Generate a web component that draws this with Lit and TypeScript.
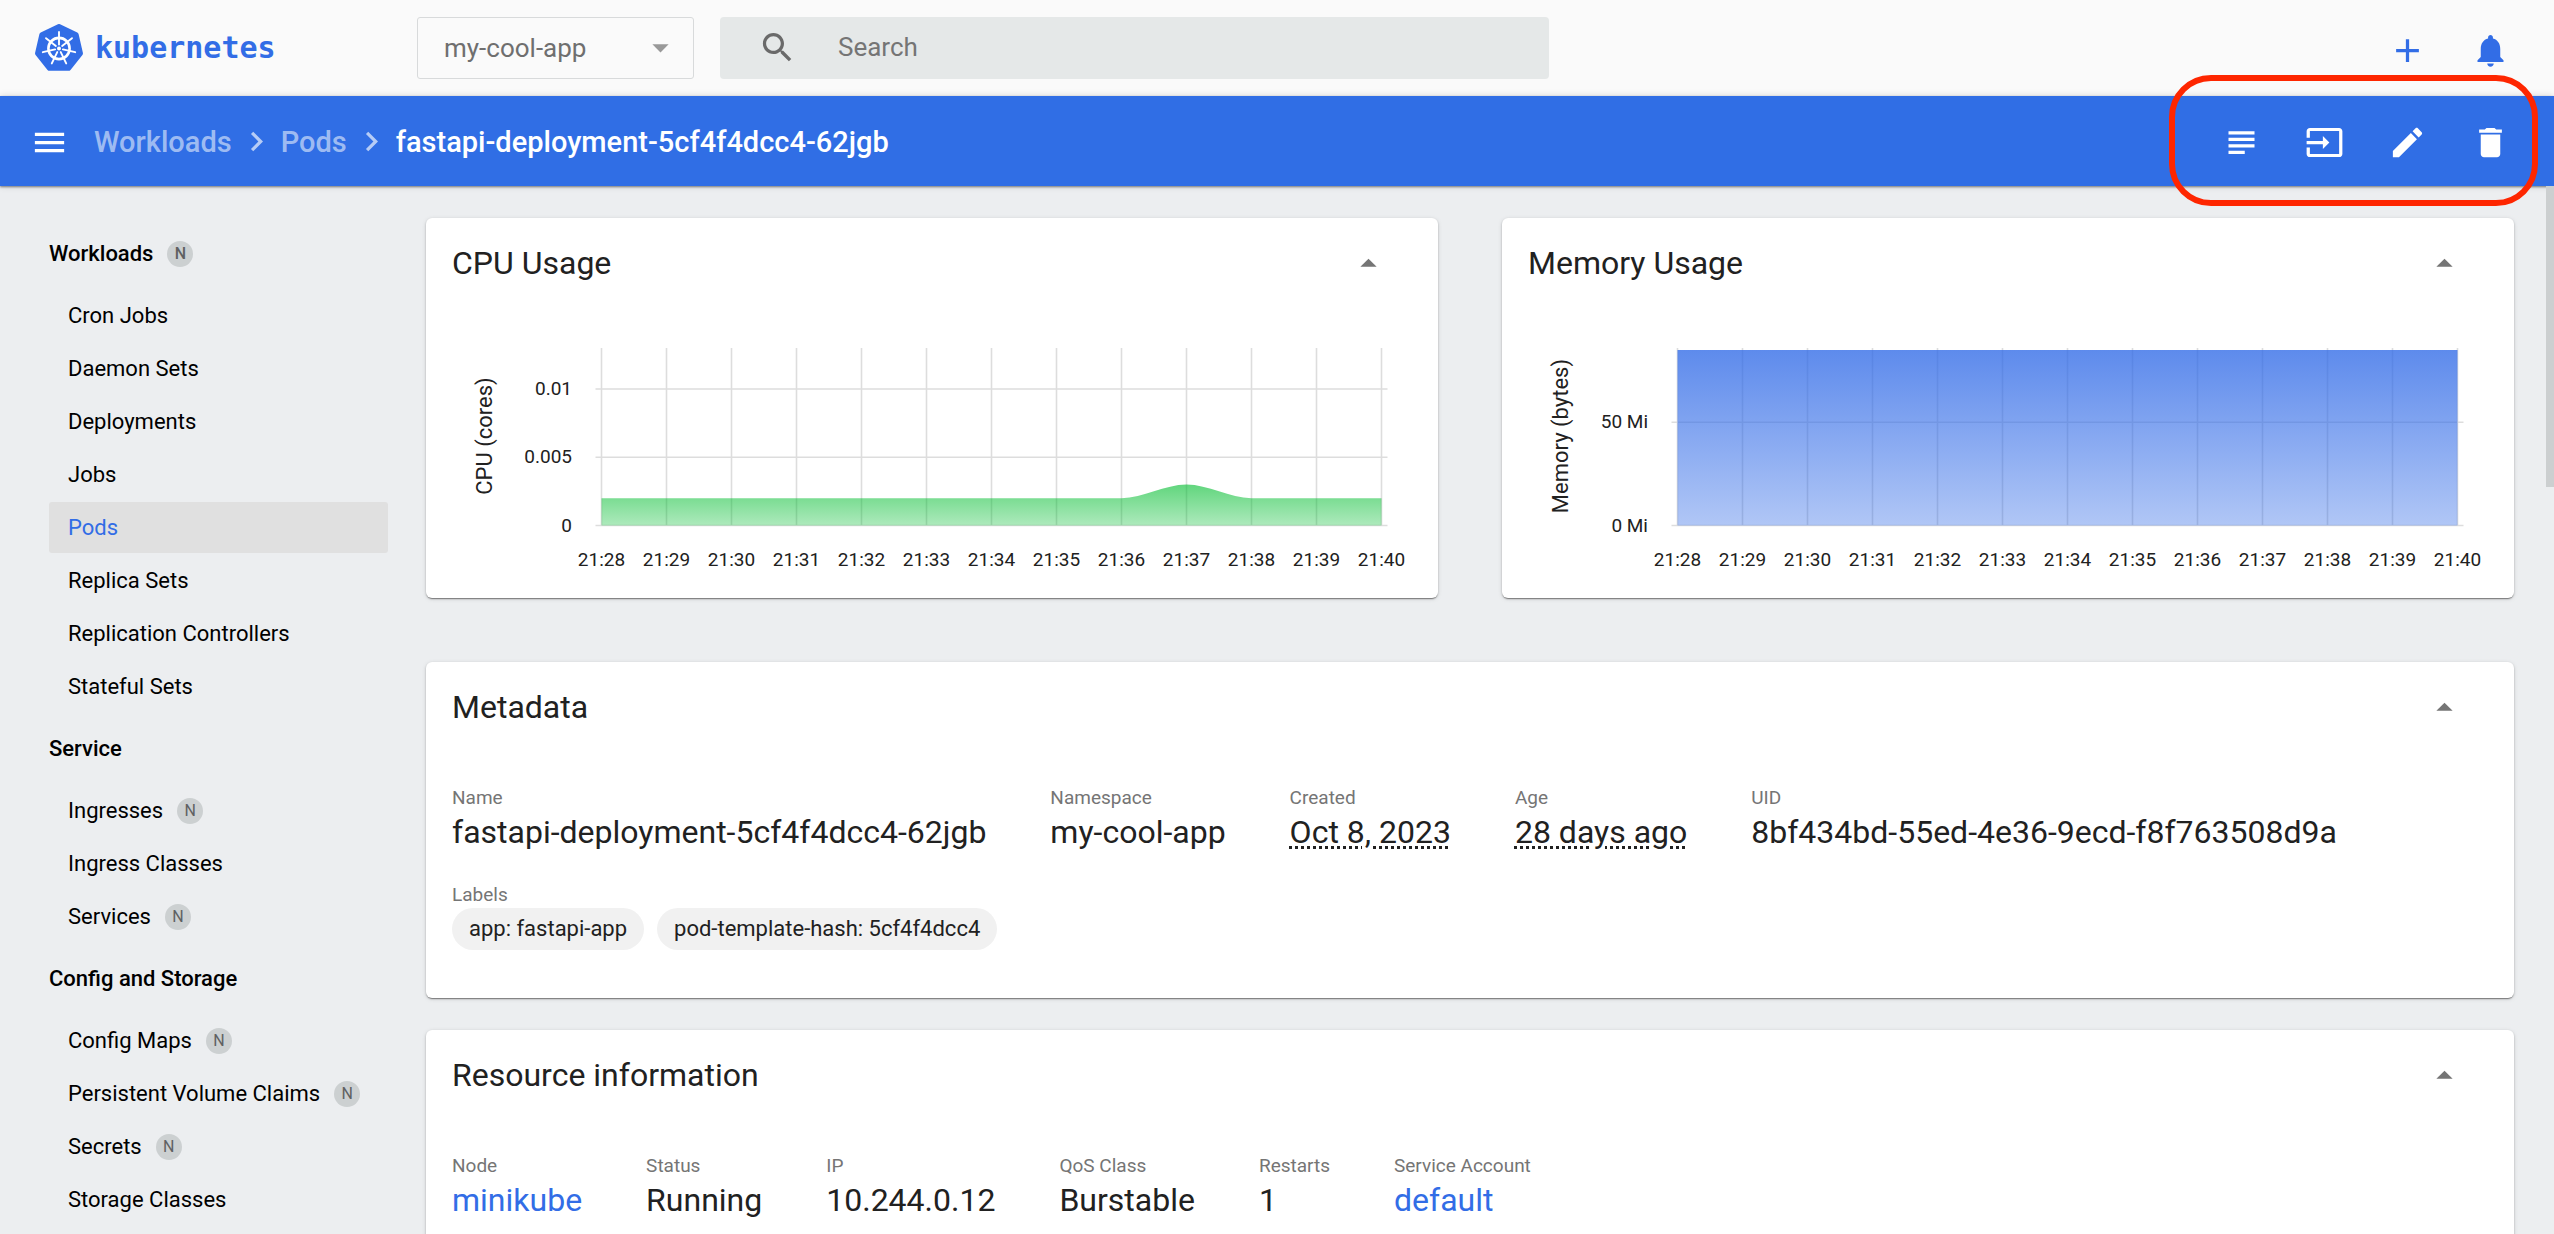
import { LitElement, html, svg, css, nothing } from "lit";
import { customElement, property } from "lit/decorators.js";
import { classMap } from "lit/directives/class-map.js";

const ICONS = {
  add: "M19 13h-6v6h-2v-6H5v-2h6V5h2v6h6v2z",
  bell: "M12 22c1.1 0 2-.9 2-2h-4c0 1.1.89 2 2 2zm6-6v-5c0-3.07-1.64-5.64-4.5-6.32V4c0-.83-.67-1.5-1.5-1.5s-1.5.67-1.5 1.5v.68C7.63 5.36 6 7.92 6 11v5l-2 2v1h16v-1l-2-2z",
  search:
    "M15.5 14h-.79l-.28-.27C15.41 12.59 16 11.11 16 9.5 16 5.91 13.09 3 9.5 3S3 5.91 3 9.5 5.91 16 9.5 16c1.61 0 3.09-.59 4.23-1.57l.27.28v.79l5 4.99L20.49 19l-4.99-5zm-6 0C7.01 14 5 11.99 5 9.5S7.01 5 9.5 5 14 7.01 14 9.5 11.99 14 9.5 14z",
  menu: "M3 18h18v-2H3v2zm0-5h18v-2H3v2zm0-7v2h18V6H3z",
  chevron: "M10 6L8.59 7.41 13.17 12l-4.58 4.59L10 18l6-6z",
  logs: "M14 17H4v2h10v-2zm6-8H4v2h16V9zM4 15h16v-2H4v2zM4 5v2h16V5H4z",
  exec: "M21 3.01H3c-1.1 0-2 .9-2 2V9h2V4.99h18v14.03H3V15H1v4.01c0 1.1.9 1.98 2 1.98h18c1.1 0 2-.88 2-1.98v-14c0-1.11-.9-2-2-2zM11 16l4-4-4-4v3H1v2h10v3z",
  edit: "M3 17.25V21h3.75L17.81 9.94l-3.75-3.75L3 17.25zM20.71 7.04c.39-.39.39-1.02 0-1.41l-2.34-2.34c-.39-.39-1.02-.39-1.41 0l-1.83 1.83 3.75 3.75 1.83-1.83z",
  trash: "M6 19c0 1.1.9 2 2 2h8c1.1 0 2-.9 2-2V7H6v12zM19 4h-3.5l-1-1h-5l-1 1H5v2h14V4z",
  up: "M7 14l5-5 5 5z",
  down: "M7 10l5 5 5-5z",
};

const icon = (name: keyof typeof ICONS) =>
  html`<svg class="icon" viewBox="0 0 24 24" aria-hidden="true"><path d=${ICONS[name]}></path></svg>`;

const shared = css`
  *,
  *::before,
  *::after {
    box-sizing: border-box;
  }
  .icon {
    display: block;
    width: 39px;
    height: 39px;
    fill: currentColor;
  }
  button {
    display: block;
    padding: 0;
    border: 0;
    background: none;
    color: inherit;
    font: inherit;
    cursor: pointer;
  }
`;

interface Tick {
  value: number;
  label: string;
}

@customElement("usage-chart")
class UsageChart extends LitElement {
  @property() label = "";
  @property() tone = "green";
  @property({ type: Number }) max = 1;
  @property({ attribute: false }) ticks: Tick[] = [];
  @property({ attribute: false }) values: number[] = [];

  static styles = css`
    :host {
      display: block;
    }
    .chart {
      display: block;
      width: 100%;
      height: auto;
      font-family: Roboto, "Liberation Sans", sans-serif;
      fill: #212121;
    }
    .grid {
      stroke: #dddddd;
      stroke-width: 1.6;
    }
    .tick {
      font-size: 19px;
    }
    .axis {
      font-size: 22px;
      text-anchor: middle;
    }
    .end {
      text-anchor: end;
    }
    .middle {
      text-anchor: middle;
    }
  `;

  render() {
    const left = 175.5;
    const right = 955.5;
    const top = 40;
    const bottom = 217.5;
    const step = (right - left) / (this.values.length - 1);
    const y = (v: number) => bottom - (v / this.max) * (bottom - top);
    const x = (i: number) => left + i * step;
    let area = `M${x(0)} ${bottom}L${x(0)} ${y(this.values[0])}`;
    for (let i = 1; i < this.values.length; i++) {
      const from = y(this.values[i - 1]);
      const to = y(this.values[i]);
      area += `C${x(i - 1) + step / 3} ${from} ${x(i) - step / 3} ${to} ${x(i)} ${to}`;
    }
    area += `L${right} ${bottom}Z`;
    const green = this.tone === "green";
    const color = green ? "#00bc2e" : "#306ae7";
    return html`
      <svg class="chart" viewBox="0 0 1012 290" role="img" aria-label=${this.label}>
        <defs>
          <linearGradient id="fade" x1="0" y1="0" x2="0" y2="1">
            <stop offset="0" stop-color=${color} stop-opacity=${green ? 0.62 : 0.78}></stop>
            <stop offset="1" stop-color=${color} stop-opacity=${green ? 0.32 : 0.38}></stop>
          </linearGradient>
        </defs>
        ${this.values.map(
          (_, i) => svg`
            <line class="grid" x1=${x(i)} x2=${x(i)} y1=${top} y2=${bottom}></line>
            <text class="tick middle" x=${x(i)} y="258">21:${28 + i}</text>`
        )}
        ${this.ticks.map(
          (t) => svg`
            <line class="grid" x1=${left - 6} x2=${right + 6} y1=${y(t.value)} y2=${y(t.value)}></line>
            <text class="tick end" x="146" y=${y(t.value) + 6}>${t.label}</text>`
        )}
        <path d=${area} fill="url(#fade)"></path>
        <text class="axis" transform="translate(66 128) rotate(-90)">${this.label}</text>
      </svg>
    `;
  }
}

@customElement("dash-card")
class DashCard extends LitElement {
  @property() heading = "";

  static styles = [
    shared,
    css`
      :host {
        display: block;
        border-radius: 6px;
        background: #ffffff;
        box-shadow: 0 2px 1px -1px rgba(0, 0, 0, 0.3), 0 1px 2px rgba(0, 0, 0, 0.25),
          0 1px 5px rgba(0, 0, 0, 0.1);
      }
      .head {
        display: flex;
        align-items: center;
        justify-content: space-between;
        height: 90px;
        padding: 0 50px 0 26px;
      }
      .title {
        margin: 0;
        font-size: 32px;
        line-height: 48px;
        font-weight: 400;
        color: #212121;
      }
      .toggle {
        color: #757575;
      }
    `,
  ];

  render() {
    return html`
      <header class="head">
        <h2 class="title">${this.heading}</h2>
        <button class="toggle" type="button" aria-label="Collapse ${this.heading}">${icon("up")}</button>
      </header>
      <slot></slot>
    `;
  }
}

interface NavItem {
  label: string;
  badge?: boolean;
  active?: boolean;
}

interface NavGroup extends NavItem {
  items: NavItem[];
}

const NAV: NavGroup[] = [
  {
    label: "Workloads",
    badge: true,
    items: [
      { label: "Cron Jobs" },
      { label: "Daemon Sets" },
      { label: "Deployments" },
      { label: "Jobs" },
      { label: "Pods", active: true },
      { label: "Replica Sets" },
      { label: "Replication Controllers" },
      { label: "Stateful Sets" },
    ],
  },
  {
    label: "Service",
    items: [
      { label: "Ingresses", badge: true },
      { label: "Ingress Classes" },
      { label: "Services", badge: true },
    ],
  },
  {
    label: "Config and Storage",
    items: [
      { label: "Config Maps", badge: true },
      { label: "Persistent Volume Claims", badge: true },
      { label: "Secrets", badge: true },
      { label: "Storage Classes" },
    ],
  },
];

interface Prop {
  label: string;
  value: string;
  kind?: "link" | "hint";
}

const METADATA: Prop[] = [
  { label: "Name", value: "fastapi-deployment-5cf4f4dcc4-62jgb" },
  { label: "Namespace", value: "my-cool-app" },
  { label: "Created", value: "Oct 8, 2023", kind: "hint" },
  { label: "Age", value: "28 days ago", kind: "hint" },
  { label: "UID", value: "8bf434bd-55ed-4e36-9ecd-f8f763508d9a" },
];

const RESOURCE: Prop[] = [
  { label: "Node", value: "minikube", kind: "link" },
  { label: "Status", value: "Running" },
  { label: "IP", value: "10.244.0.12" },
  { label: "QoS Class", value: "Burstable" },
  { label: "Restarts", value: "1" },
  { label: "Service Account", value: "default", kind: "link" },
];

const CPU = [2, 2, 2, 2, 2, 2, 2, 2, 2, 3, 2, 2, 2].map((v) => v / 1000);
const CPU_TICKS: Tick[] = [
  { value: 0, label: "0" },
  { value: 0.005, label: "0.005" },
  { value: 0.01, label: "0.01" },
];
const MEMORY = Array.from({ length: 13 }, () => 85);
const MEMORY_TICKS: Tick[] = [
  { value: 0, label: "0 Mi" },
  { value: 50, label: "50 Mi" },
];

const point = (turn: number, radius: number) => {
  const a = (turn / 7) * 2 * Math.PI - Math.PI / 2;
  return [24 + radius * Math.cos(a), 24.5 + radius * Math.sin(a)];
};

@customElement("app-root")
class AppRoot extends LitElement {
  static styles = [
    shared,
    css`
      :host {
        position: relative;
        display: flex;
        flex-direction: column;
        height: 100vh;
        overflow: hidden;
        background: #eceef0;
        color: #000000;
        font-family: Roboto, "Liberation Sans", sans-serif;
        font-size: 22px;
      }
      a {
        color: inherit;
        text-decoration: none;
      }
      .topbar {
        display: flex;
        flex: none;
        align-items: center;
        height: 96px;
        padding: 0 44px 0 35px;
        background: #fafafa;
      }
      .brand {
        display: flex;
        flex: 0 0 382px;
        align-items: center;
        gap: 12px;
        color: #326de6;
        font-family: "DejaVu Sans Mono", monospace;
        font-size: 30px;
        line-height: 48px;
        font-weight: 700;
      }
      .logo {
        width: 48px;
        height: 49px;
      }
      .logo-body {
        fill: #326de6;
        stroke: #326de6;
        stroke-width: 5;
        stroke-linejoin: round;
      }
      .logo-wheel {
        fill: none;
        stroke: #ffffff;
        stroke-width: 2.6;
      }
      .logo-spoke {
        stroke: #ffffff;
        stroke-width: 1.9;
        stroke-linecap: round;
      }
      .logo-hub {
        fill: #ffffff;
      }
      .namespace {
        position: relative;
        flex: 0 0 277px;
      }
      .namespace-select {
        display: block;
        width: 100%;
        height: 62px;
        margin: 0;
        padding: 0 60px 0 26px;
        border: 1px solid #d8dadb;
        border-radius: 3px;
        appearance: none;
        background: transparent;
        color: #6f6f6f;
        font: inherit;
        font-size: 26px;
      }
      .namespace-arrow {
        position: absolute;
        top: 11px;
        right: 14px;
        color: #999999;
        pointer-events: none;
      }
      .search {
        display: flex;
        flex: 0 1 829px;
        align-items: center;
        gap: 41px;
        height: 62px;
        margin-left: 26px;
        padding: 0 26px 2px 38px;
        border-radius: 4px;
        background: #e5e8e8;
        color: #6a6a6a;
      }
      .search-input {
        flex: 1;
        min-width: 0;
        height: 100%;
        padding: 0;
        border: 0;
        outline: 0;
        background: none;
        font: inherit;
        font-size: 26px;
        color: #212121;
      }
      .search-input::placeholder {
        color: #757575;
        opacity: 1;
      }
      .actions {
        display: flex;
        gap: 44px;
        margin-left: auto;
      }
      .topbar .actions {
        padding-top: 4px;
        color: #326de6;
      }
      .toolbar {
        position: relative;
        display: flex;
        flex: none;
        align-items: center;
        height: 90px;
        padding: 3px 44px 0 30px;
        background: #306ee5;
        box-shadow: 0 1px 2px rgba(0, 0, 0, 0.45), 0 0 7px rgba(0, 0, 0, 0.15);
        color: #ffffff;
      }
      .crumbs {
        display: flex;
        align-items: center;
        margin-left: 25px;
        padding-bottom: 2px;
        gap: 5px;
        font-size: 29px;
        line-height: 36px;
        font-weight: 500;
      }
      .crumb {
        color: rgba(255, 255, 255, 0.55);
      }
      .crumb-sep {
        color: rgba(255, 255, 255, 0.65);
      }
      .callout {
        position: absolute;
        top: -21px;
        right: 16px;
        width: 369px;
        height: 131px;
        border: 6px solid #fe2600;
        border-radius: 42px;
        pointer-events: none;
      }
      .body {
        position: relative;
        display: flex;
        flex: 1;
        min-height: 0;
        overflow: hidden;
      }
      .sidebar {
        display: flex;
        flex: 0 0 388px;
        flex-direction: column;
        gap: 2px;
        padding: 33px 0 0 49px;
      }
      .group {
        display: flex;
        flex-direction: column;
        gap: 2px;
      }
      .nav-link {
        display: flex;
        flex: none;
        align-items: center;
        gap: 14px;
        height: 51px;
        padding-left: 19px;
        border-radius: 3px;
      }
      .nav-link.heading {
        margin: 9px 0;
        padding-left: 0;
        font-weight: 500;
      }
      .nav-link.active {
        background: #e0e0e0;
        color: #326de6;
      }
      .badge {
        width: 26px;
        height: 26px;
        border-radius: 50%;
        background: #ccd0d1;
        color: #5f6162;
        font-size: 16px;
        line-height: 26px;
        text-align: center;
      }
      .content {
        display: flex;
        flex: 1;
        flex-direction: column;
        gap: 32px;
        min-width: 0;
        padding: 32px 40px 32px 38px;
      }
      .charts {
        display: grid;
        grid-template-columns: 1fr 1fr;
        gap: 64px;
        margin-bottom: 32px;
      }
      .details {
        display: flex;
        flex-direction: column;
        gap: 29px;
        padding: 33px 26px 48px;
      }
      .row {
        display: flex;
        gap: 64px;
        margin: 0;
      }
      .prop-label {
        color: #757575;
        font-size: 19px;
        line-height: 26px;
      }
      .prop-value {
        margin: 0;
        color: #212121;
        font-size: 32px;
        line-height: 42px;
        white-space: nowrap;
      }
      .link {
        color: #326de6;
      }
      .hint {
        text-decoration: underline dotted 3px;
        text-underline-offset: 3px;
      }
      .chips {
        display: flex;
        gap: 13px;
        margin: 0;
      }
      .chip {
        padding: 0 17px;
        border-radius: 21px;
        background: #f1f1f1;
        color: #212121;
        font-size: 22px;
        line-height: 42px;
      }
      .scroll-thumb {
        position: absolute;
        top: 0;
        right: 0;
        width: 8px;
        height: 301px;
        background: #cccfd0;
      }
    `,
  ];

  private logo() {
    const corners = Array.from({ length: 7 }, (_, i) => point(i, 22).join(",")).join(" ");
    return html`
      <svg class="logo" viewBox="0 0 48 49" aria-hidden="true">
        <polygon class="logo-body" points=${corners}></polygon>
        <circle class="logo-wheel" cx="24" cy="24.5" r="10.6"></circle>
        ${Array.from({ length: 7 }, (_, i) => {
          const [x1, y1] = point(i, 4);
          const [x2, y2] = point(i, 16.6);
          return svg`<line class="logo-spoke" x1=${x1} y1=${y1} x2=${x2} y2=${y2}></line>`;
        })}
        <circle class="logo-hub" cx="24" cy="24.5" r="2"></circle>
      </svg>
    `;
  }

  private navLink(item: NavItem, heading = false) {
    return html`
      <a class=${classMap({ "nav-link": true, heading, active: !!item.active })} href="#">
        <span>${item.label}</span>${item.badge ? html`<span class="badge">N</span>` : nothing}
      </a>
    `;
  }

  private props(list: Prop[]) {
    return html`
      <dl class="row">
        ${list.map(
          (p) => html`
            <div>
              <dt class="prop-label">${p.label}</dt>
              <dd class="prop-value">
                ${p.kind === "link"
                  ? html`<a class="link" href="#">${p.value}</a>`
                  : p.kind === "hint"
                    ? html`<span class="hint">${p.value}</span>`
                    : p.value}
              </dd>
            </div>
          `
        )}
      </dl>
    `;
  }

  render() {
    return html`
      <header class="topbar">
        <a class="brand" href="#">${this.logo()}<span>kubernetes</span></a>
        <div class="namespace">
          <select class="namespace-select" aria-label="Namespace">
            <option>my-cool-app</option>
          </select>
          <span class="namespace-arrow">${icon("down")}</span>
        </div>
        <label class="search">
          ${icon("search")}
          <input class="search-input" type="text" placeholder="Search" aria-label="Search" />
        </label>
        <div class="actions">
          <button type="button" aria-label="Create new resource">${icon("add")}</button>
          <button type="button" aria-label="Notifications">${icon("bell")}</button>
        </div>
      </header>

      <div class="toolbar">
        <button type="button" aria-label="Toggle navigation">${icon("menu")}</button>
        <nav class="crumbs" aria-label="Breadcrumb">
          <a class="crumb" href="#">Workloads</a>
          <span class="crumb-sep">${icon("chevron")}</span>
          <a class="crumb" href="#">Pods</a>
          <span class="crumb-sep">${icon("chevron")}</span>
          <span>fastapi-deployment-5cf4f4dcc4-62jgb</span>
        </nav>
        <div class="actions">
          <button type="button" aria-label="View logs">${icon("logs")}</button>
          <button type="button" aria-label="Exec into pod">${icon("exec")}</button>
          <button type="button" aria-label="Edit resource">${icon("edit")}</button>
          <button type="button" aria-label="Delete resource">${icon("trash")}</button>
        </div>
        <div class="callout"></div>
      </div>

      <div class="body">
        <nav class="sidebar" aria-label="Resources">
          ${NAV.map(
            (g) => html`
              <div class="group">
                ${this.navLink({ label: g.label, badge: g.badge }, true)} ${g.items.map((i) => this.navLink(i))}
              </div>
            `
          )}
        </nav>
        <main class="content">
          <div class="charts">
            <dash-card heading="CPU Usage">
              <usage-chart label="CPU (cores)" tone="green" max="0.013" .ticks=${CPU_TICKS} .values=${CPU}></usage-chart>
            </dash-card>
            <dash-card heading="Memory Usage">
              <usage-chart label="Memory (bytes)" tone="blue" max="86" .ticks=${MEMORY_TICKS} .values=${MEMORY}></usage-chart>
            </dash-card>
          </div>
          <dash-card heading="Metadata">
            <div class="details">
              ${this.props(METADATA)}
              <div>
                <div class="prop-label">Labels</div>
                <div class="chips">
                  <span class="chip">app: fastapi-app</span>
                  <span class="chip">pod-template-hash: 5cf4f4dcc4</span>
                </div>
              </div>
            </div>
          </dash-card>
          <dash-card heading="Resource information">
            <div class="details">${this.props(RESOURCE)}</div>
          </dash-card>
        </main>
        <div class="scroll-thumb"></div>
      </div>
    `;
  }
}
